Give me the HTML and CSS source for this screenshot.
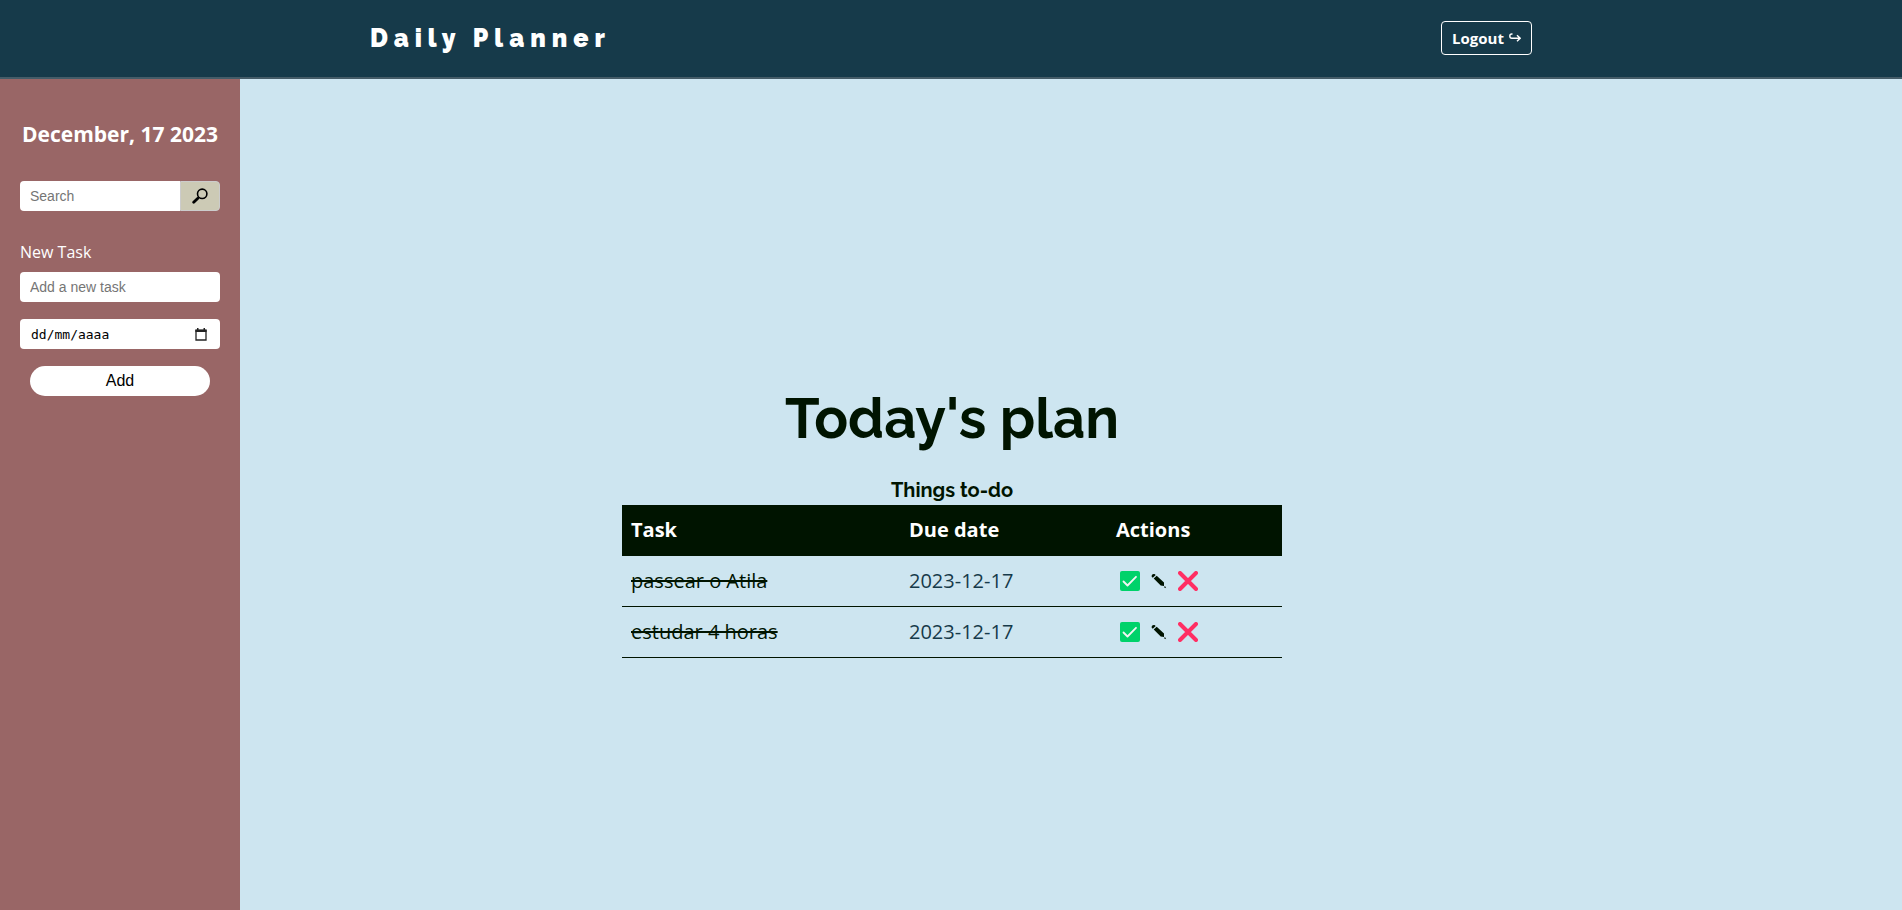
FILE: index.html
```html
<!DOCTYPE html>
<html lang="en">
<head>
<meta charset="utf-8">
<title>Daily Planner</title>
<link rel="stylesheet" href="styles.css">
</head>
<body>
<svg class="sprite" aria-hidden="true">
  <symbol id="check" viewBox="0 0 20 20"><rect width="20" height="20" rx="2" fill="#00d26a"/><path d="M3.5 10.500l4 4L16 5.800" fill="none" stroke="#f4f4f4" stroke-width="1.800" stroke-linecap="round" stroke-linejoin="round"/></symbol>
  <symbol id="pencil" viewBox="0 0 16 16"><path d="M.7 3.700C.3 2 1.700.6 3.500 1.100l1.200 1-2.900 2.700zM2.700 5.600l3-2.800 7.300 6.800 0 3.300-3.300-.4zM14 13.100l1.200 2.200-2.300-1z" fill="#001400"/></symbol>
  <symbol id="cross" viewBox="0 0 20 20"><path d="M2 2l16 16M18 2L2 18" fill="none" stroke="#ff2e63" stroke-width="4" stroke-linecap="round"/></symbol>
</svg>
<header class="header">
  <div class="header-inner">
    <div class="brand">Daily Planner</div>
    <button class="logout" type="button">Logout <svg class="logout-icon" viewBox="0 0 12 10" aria-hidden="true"><path d="M3.500 1H2.800C1.500 1 .8 1.800.8 3s.8 2.200 2 2.200H11M8 2.200l3.200 3L8 8.200" fill="none" stroke="currentColor" stroke-width="1.400"/></svg></button>
  </div>
</header>
<div class="layout">
  <aside class="sidebar">
    <h2 class="today">December, 17 2023</h2>
    <form class="search">
      <input class="field search-field" type="text" placeholder="Search" aria-label="Search">
      <button class="search-button" type="button" aria-label="Search"><svg class="search-icon" viewBox="0 0 16 16" aria-hidden="true"><circle cx="10.200" cy="5.800" r="4.700" fill="none" stroke="#000" stroke-width="1.600"/><path d="M6.600 9.400L5.800 10.200" stroke="#000" stroke-width="1.600"/><path d="M5.600 10.400L1.700 14.300" stroke="#000" stroke-width="2.800" stroke-linecap="round"/></svg></button>
    </form>
    <form class="new-task">
      <label class="label" for="task">New Task</label>
      <input class="field" id="task" type="text" placeholder="Add a new task">
      <div class="date-box">
        <input class="date-field" type="text" placeholder="dd/mm/aaaa" aria-label="Due date">
        <button class="date-button" type="button" aria-label="Open calendar"><svg class="date-icon" viewBox="0 0 12 13" aria-hidden="true"><path d="M1 2.500h10v9.500H1z" fill="none" stroke="#222" stroke-width="1.300"/><path d="M.4 1.500h11.200v2.600H.4zM2 0h1.500v2H2zM8.500 0H10v2H8.500z" fill="#222"/></svg></button>
      </div>
      <button class="add" type="button">Add</button>
    </form>
  </aside>
  <main class="main">
    <h1 class="title">Today's plan</h1>
    <table class="tasks">
      <caption class="caption">Things to-do</caption>
      <colgroup><col class="col-task"><col class="col-date"><col></colgroup>
      <thead>
        <tr><th>Task</th><th>Due date</th><th>Actions</th></tr>
      </thead>
      <tbody>
        <tr>
          <td class="done">passear o Atila</td><td class="date">2023-12-17</td>
          <td><div class="actions">
            <button class="action" type="button" aria-label="Done"><svg class="icon"><use href="#check"/></svg></button>
            <button class="action" type="button" aria-label="Edit"><svg class="icon-small"><use href="#pencil"/></svg></button>
            <button class="action" type="button" aria-label="Delete"><svg class="icon"><use href="#cross"/></svg></button>
          </div></td>
        </tr>
        <tr>
          <td class="done">estudar 4 horas</td><td class="date">2023-12-17</td>
          <td><div class="actions">
            <button class="action" type="button" aria-label="Done"><svg class="icon"><use href="#check"/></svg></button>
            <button class="action" type="button" aria-label="Edit"><svg class="icon-small"><use href="#pencil"/></svg></button>
            <button class="action" type="button" aria-label="Delete"><svg class="icon"><use href="#cross"/></svg></button>
          </div></td>
        </tr>
      </tbody>
    </table>
  </main>
</div>
</body>
</html>
```
FILE: styles.css
```css
* { box-sizing: border-box; }

body {
  margin: 0;
  min-height: 100vh;
  display: flex;
  flex-direction: column;
  background: #cde5f0;
  color: #001400;
  font-family: "Open Sans", sans-serif;
  font-size: 16px;
}

button { cursor: pointer; }
svg { display: block; }
.sprite { display: none; }

.header {
  background: #163a4a;
  border-bottom: 2px solid #455c68;
  padding: 0 20px 2px;
}
.header-inner {
  max-width: 1162px;
  min-height: 75px;
  margin: 0 auto;
  display: flex;
  align-items: center;
  justify-content: space-between;
}
.brand {
  color: #fff;
  font-family: Raleway, Inter, sans-serif;
  font-size: 25px;
  font-weight: 900;
  letter-spacing: 6px;
}
.logout {
  display: flex;
  align-items: center;
  gap: 5px;
  height: 34px;
  padding: 0 10px;
  border: 1px solid #fff;
  border-radius: 4px;
  background: transparent;
  color: #fff;
  font: bold 15px "Open Sans", sans-serif;
}
.logout-icon { width: 12px; height: 10px; }

.layout { flex: 1; display: flex; }

.sidebar {
  flex: 0 0 240px;
  padding: 40px 20px;
  background: #996666;
  color: #fff;
}
.today {
  margin: 0 0 32px;
  font-size: 21px;
  line-height: 30px;
  text-align: center;
  white-space: nowrap;
}
.field {
  width: 100%;
  height: 30px;
  padding: 0 10px;
  border: 0;
  border-radius: 4px;
  background: #fff;
  font: 14px "Liberation Sans", Arial, sans-serif;
}
.field::placeholder { color: #757575; }
.search { display: flex; margin-bottom: 30px; }
.search-field { flex: 1; width: 0; border-radius: 4px 0 0 4px; }
.search-button {
  width: 40px;
  height: 30px;
  padding: 0;
  display: grid;
  place-items: center;
  border: 1px solid #ccc;
  border-radius: 0 4px 4px 0;
  background: #cccab5;
}
.search-icon { width: 16px; height: 16px; }

.new-task { display: flex; flex-direction: column; }
.label { margin-bottom: 8px; line-height: 23px; }
.date-box {
  display: flex;
  align-items: center;
  height: 30px;
  margin: 17px 0;
  padding: 0 13px 0 11px;
  border-radius: 4px;
  background: #fff;
}
.date-field {
  flex: 1;
  width: 0;
  padding: 0;
  border: 0;
  background: transparent;
  font: 13px "DejaVu Sans Mono", monospace;
}
.date-field::placeholder { color: #000; }
.date-button { padding: 0; border: 0; background: transparent; }
.date-icon { width: 12px; height: 13px; }
.add {
  height: 30px;
  margin: 0 10px;
  border: 0;
  border-radius: 15px;
  background: #fff;
  color: #000;
  font: 16px "Liberation Sans", Arial, sans-serif;
}

/* The right padding mirrors the sidebar so the content is centred in the window. */
.main {
  flex: 1;
  display: flex;
  flex-direction: column;
  align-items: center;
  justify-content: center;
  padding-right: 238px;
}
.title {
  margin: 54px 0 26px;
  font-family: Raleway, Lato, sans-serif;
  font-size: 56px;
  font-weight: 700;
  line-height: 66px;
}
.tasks {
  width: 660px;
  max-width: 100%;
  table-layout: fixed;
  border-collapse: collapse;
  font-size: 20px;
  line-height: 26px;
}
.caption {
  padding-bottom: 2px;
  font-family: Raleway, Lato, sans-serif;
  font-weight: 700;
}
.col-task { width: 278px; }
.col-date { width: 207px; }
.tasks th, .tasks td { padding: 12px 9px; text-align: left; border-bottom: 1px solid #001400; }
.tasks th { background: #001400; color: #fff; font-weight: bold; }
.tasks .date { color: #163a4a; }
.tasks .done { text-decoration: line-through; text-decoration-thickness: 2px; }
.actions { display: flex; align-items: center; gap: 11px; padding-left: 4px; }
.action { padding: 0; border: 0; background: transparent; }
.icon { width: 20px; height: 20px; }
.icon-small { width: 16px; height: 16px; }
```
